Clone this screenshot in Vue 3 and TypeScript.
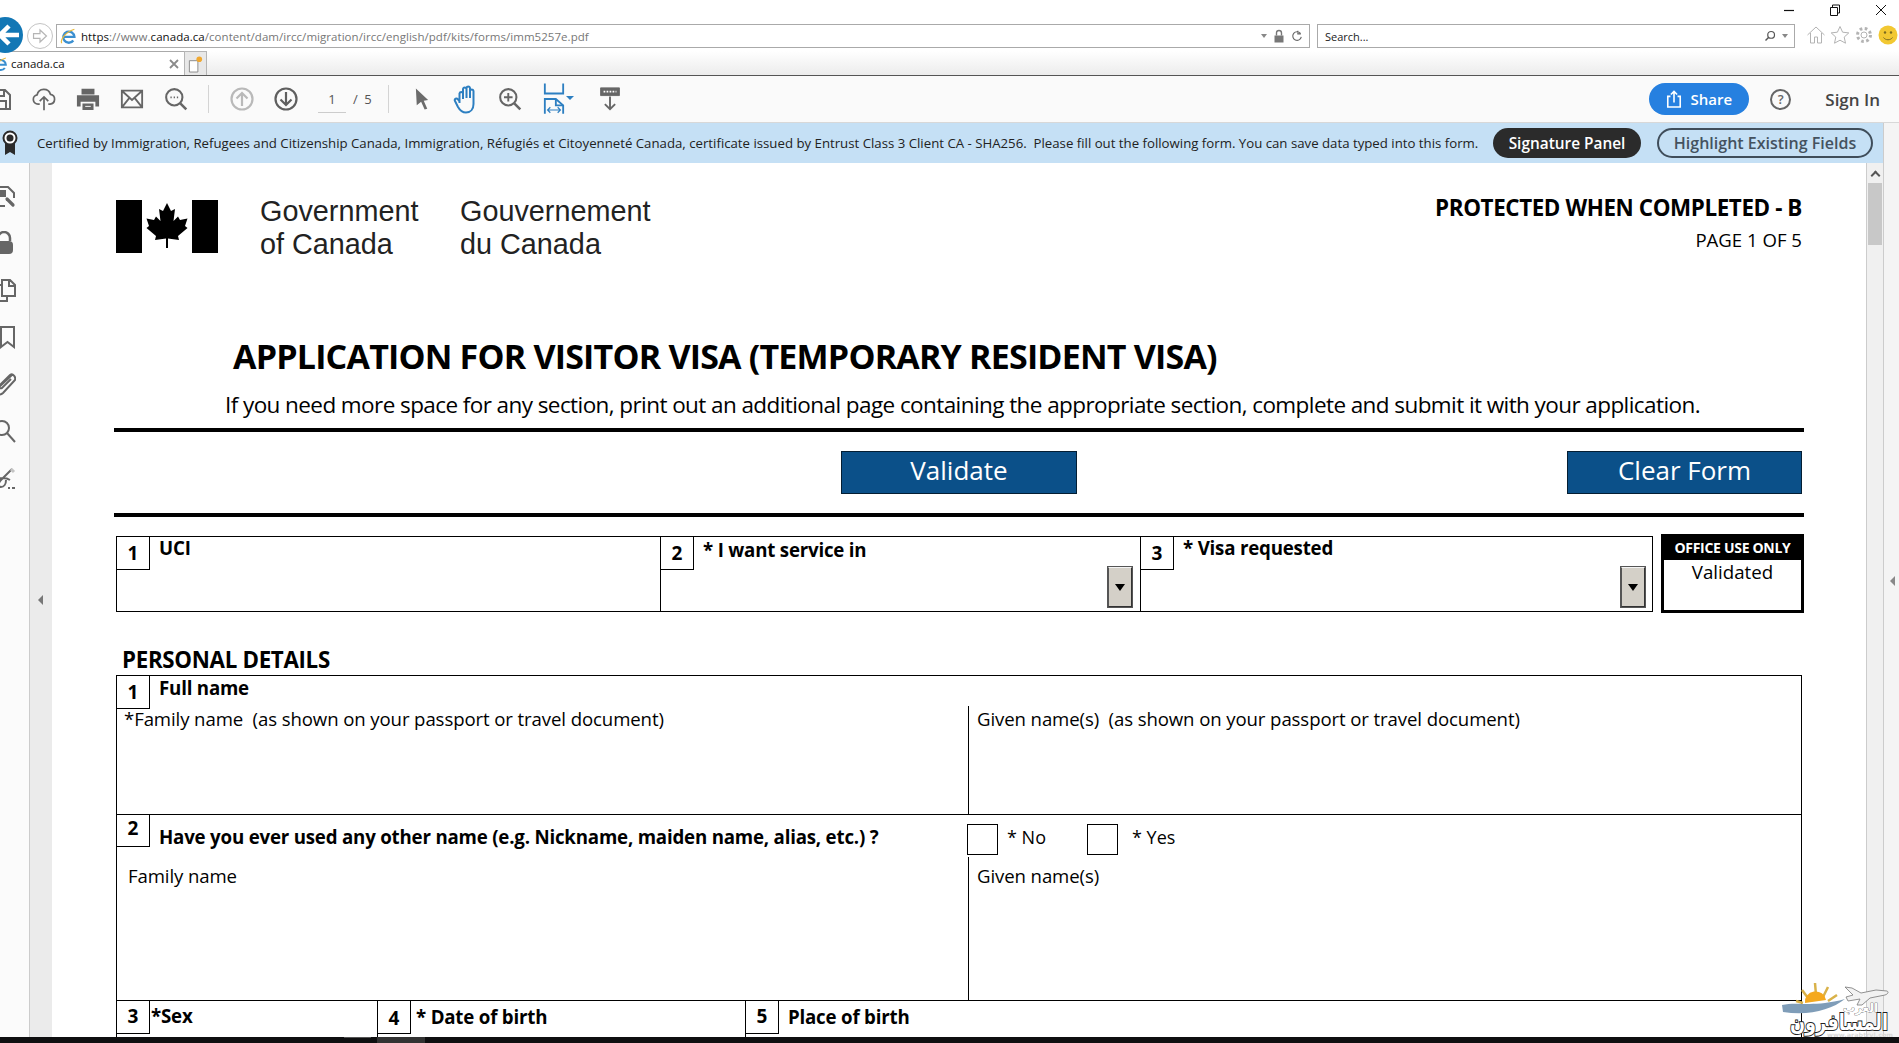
<script setup lang="ts">
const trustText =
  'Certified by Immigration, Refugees and Citizenship Canada, Immigration, Réfugiés et Citoyenneté Canada, certificate issued by Entrust Class 3 Client CA - SHA256.  Please fill out the following form. You can save data typed into this form.'
</script>

<template>
  <div class="screen">
    <!-- browser chrome -->
    <header class="chrome">
      <div class="win-row">
        <svg class="win" viewBox="0 0 12 12"><path d="M1 6.500h10" stroke="#111" stroke-width="1.200" /></svg>
        <svg class="win" viewBox="0 0 12 12" fill="none" stroke="#111"><path d="M1.500 3.500h7v8h-7zM3.500 3.500v-2.500h7v8h-2" /></svg>
        <svg class="win" viewBox="0 0 12 12" fill="none" stroke="#111"><path d="M1 1l10 10M11 1L1 11" /></svg>
      </div>
      <div class="addr-row">
        <div class="nav-back">
          <svg viewBox="0 0 36 36"><path d="M28 18H10M18 9l-9 9 9 9" fill="none" stroke="#fff" stroke-width="4.500" /></svg>
        </div>
        <div class="nav-fwd">
          <svg viewBox="0 0 26 26" fill="none" stroke="#b5b5b5" stroke-width="1.300"><path d="M6 10.500h7V6.500l7 6.500-7 6.500v-4H6z" /></svg>
        </div>
        <div class="addr">
          <svg class="ie" viewBox="0 0 20 20">
            <path d="M4.500 11h11.500a6.200 6.200 0 1 0-1.200 4" fill="none" stroke="#3b8fd0" stroke-width="2.600" />
            <path d="M2 18c-2-3 3-12 14-15.500" fill="none" stroke="#e8b93c" stroke-width="1.300" />
          </svg>
          <span class="url"><b>https</b>://www.<b>canada.ca</b>/content/dam/ircc/migration/ircc/english/pdf/kits/forms/imm5257e.pdf</span>
          <span class="addr-end">
            <i class="caret-small" />
            <svg viewBox="0 0 12 14" class="lock"><path d="M1.500 6.500h9v7h-9z" fill="#777" /><path d="M3.500 6.500V4a2.500 2.500 0 0 1 5 0v2.500" fill="none" stroke="#777" stroke-width="1.400" /></svg>
            <svg viewBox="0 0 14 14" class="lock"><path d="M11 4a5 5 0 1 0 1 4M8 1v3.500h3.500" fill="none" stroke="#666" stroke-width="1.300" /></svg>
          </span>
        </div>
        <div class="search">
          <span>Search...</span>
          <span class="addr-end">
            <svg viewBox="0 0 16 16" class="lock"><circle cx="9.500" cy="6.500" r="4.500" fill="none" stroke="#555" stroke-width="1.600" /><path d="M6 10l-4 4" stroke="#555" stroke-width="2" /></svg>
            <i class="caret-small" />
          </span>
        </div>
        <div class="ie-tools">
          <svg viewBox="0 0 20 20" fill="none" stroke="#b3b3b3"><path d="M1.500 10L10 2l8.500 8M4.500 8v10h4v-6h3v6h4V8" /></svg>
          <svg viewBox="0 0 20 20" fill="none" stroke="#b3b3b3"><path d="M10 1.500l2.600 5.700 6.200.7-4.600 4.200 1.300 6.100L10 15.200l-5.500 3 1.300-6.100-4.600-4.200 6.200-.7z" /></svg>
          <svg viewBox="0 0 20 20" fill="none" stroke="#b3b3b3"><circle cx="10" cy="10" r="3" /><circle cx="10" cy="10" r="6.500" stroke-width="3" stroke-dasharray="2.600 2.500" /></svg>
          <svg viewBox="0 0 20 20"><circle cx="10" cy="10" r="9.500" fill="#f2c832" /><circle cx="7" cy="7.500" r="1.200" fill="#7a6a20" /><circle cx="13" cy="7.500" r="1.200" fill="#7a6a20" /><path d="M5.500 12.500c2 3 7 3 9 0" fill="none" stroke="#7a6a20" /></svg>
        </div>
      </div>
      <div class="tab-row">
        <div class="tab">
          <svg class="ie tab-ie" viewBox="0 0 20 20">
            <path d="M4.500 11h11.500a6.200 6.200 0 1 0-1.200 4" fill="none" stroke="#3b8fd0" stroke-width="2.600" />
            <path d="M2 18c-2-3 3-12 14-15.500" fill="none" stroke="#e8b93c" stroke-width="1.300" />
          </svg>
          <span class="tab-title">canada.ca</span>
          <svg class="tab-x" viewBox="0 0 10 10"><path d="M1 1l8 8M9 1L1 9" stroke="#8a8a8a" stroke-width="1.800" /></svg>
        </div>
        <div class="new-tab">
          <svg viewBox="0 0 18 20"><path d="M2.500 6.500h9v12h-9z" fill="#fff" stroke="#888" /><circle cx="13" cy="5" r="3" fill="#f0a830" /></svg>
        </div>
      </div>
    </header>

    <!-- acrobat toolbar -->
    <div class="toolbar">
      <span class="tool first">
        <svg viewBox="0 0 24 24" fill="none" stroke="#666" stroke-width="2"><path d="M3 3h14l5 5v14H3zM7 3v6h9V3M7 22v-8h11v8" /></svg>
      </span>
      <span class="tool">
        <svg viewBox="0 0 28 28" fill="none" stroke="#666" stroke-width="2"><path d="M9 20H7a5.500 5.500 0 0 1-1-10.900A8 8 0 0 1 21.500 8.500 5.800 5.800 0 0 1 21 20h-2M14 27V12M9 16.500l5-5 5 5" /></svg>
      </span>
      <span class="tool">
        <svg viewBox="0 0 26 26"><path d="M6 2h14v6H6zM1 9h24v12h-4v-5H5v5H1zM7 18h12v7H7z" fill="#666" /><path d="M10 21h6" stroke="#fff" /></svg>
      </span>
      <span class="tool">
        <svg viewBox="0 0 26 22" fill="none" stroke="#666" stroke-width="2"><path d="M2 2h22v18H2zM2 2l11 10L24 2M2 20l8-10M24 20l-8-10" /></svg>
      </span>
      <span class="tool">
        <svg viewBox="0 0 28 28" fill="none" stroke="#666" stroke-width="2.400"><circle cx="12" cy="12" r="9.500" /><path d="M19 19l7 7" stroke-width="3" /><path d="M7.500 12h1.500M11.300 12h1.500M15 12h1.500" stroke-width="2" /></svg>
      </span>
      <i class="sep first-sep" />
      <span class="tool">
        <svg viewBox="0 0 24 24" fill="none" stroke="#b9b9b9" stroke-width="2.200"><circle cx="12" cy="12" r="10.500" /><path d="M12 19V6M6.500 11.500L12 6l5.500 5.500" /></svg>
      </span>
      <span class="tool">
        <svg viewBox="0 0 24 24" fill="none" stroke="#5f5f5f" stroke-width="2.200"><circle cx="12" cy="12" r="10.500" /><path d="M12 5v13M6.500 12.500L12 18l5.500-5.500" /></svg>
      </span>
      <span class="pager"><span class="page-no">1</span><span class="page-of">/ 5</span></span>
      <i class="sep" />
      <span class="tool tool-arrow">
        <svg viewBox="0 0 16 26"><path d="M1 1l14 13-5 1 4 9-3 1-4-9-5 4z" fill="#6b6b6b" /></svg>
      </span>
      <span class="tool tool-hand">
        <svg viewBox="0 0 26 30" fill="none" stroke="#2d7fc1" stroke-width="2"><path d="M6.500 19V9.500a1.800 1.800 0 0 1 3.500 0V15M10 14V5a1.800 1.800 0 0 1 3.500 0v9M13.500 14V4a1.800 1.800 0 0 1 3.500 0v10M17 14V7a1.800 1.800 0 0 1 3.500 0v13c0 5-3 8.500-7.500 8.500-4 0-6-2-8-5.500l-3-6c-1-2 1.500-3.500 3-1.500l1.500 2" /></svg>
      </span>
      <span class="tool">
        <svg viewBox="0 0 28 28" fill="none" stroke="#666" stroke-width="2.400"><circle cx="12" cy="12" r="9.500" /><path d="M19 19l7 7" stroke-width="3" /><path d="M12 7v10M7 12h10" stroke-width="2.200" /></svg>
      </span>
      <span class="tool tool-fit">
        <svg viewBox="0 0 24 34" fill="none" stroke="#2d7fc1" stroke-width="2"><path d="M2 0v11h20V0" /><path d="M2 33V17h12l8 7v9" /><path d="M14 17v7h8" /><path d="M5 29h14M8 26l-3 3 3 3M16 26l3 3-3 3" stroke-width="1.300" /></svg>
        <i class="caret-blue" />
      </span>
      <span class="tool tool-last">
        <svg viewBox="0 0 24 28" fill="none" stroke="#666"><path d="M1 1h22v9H1z" fill="#666" /><path d="M4.500 5.500h15" stroke="#fff" stroke-width="2" stroke-dasharray="2 1.500" /><path d="M12 11v15M6 20l6 6 6-6" stroke-width="2.200" /></svg>
      </span>

      <div class="tool-right">
        <button class="share">
          <svg viewBox="0 0 18 20" fill="none" stroke="#fff" stroke-width="1.800"><path d="M5 7H2v12h14V7h-3M9 14V2M5.500 5L9 1.500 12.500 5" /></svg>
          Share
        </button>
        <span class="help">?</span>
        <span class="sign-in">Sign In</span>
      </div>
    </div>

    <div class="work">
      <div class="work-main">
        <!-- certificate bar -->
        <div class="trust">
          <svg class="ribbon" viewBox="0 0 16 26">
            <path d="M3 13v12l5-3 5 3V13z" fill="#2b2b2b" />
            <circle cx="8" cy="8" r="6.500" fill="#fff" stroke="#2b2b2b" stroke-width="2" />
            <circle cx="8" cy="8" r="3.500" fill="#2b2b2b" />
          </svg>
          <span class="trust-text">{{ trustText }}</span>
          <button class="sig">Signature Panel</button>
          <button class="hl">Highlight Existing Fields</button>
        </div>

        <div class="viewer">
          <nav class="rail">
            <svg viewBox="0 0 24 24" fill="none" stroke="#666" stroke-width="2"><path d="M8 3h8l6 6v5M8 22h5" /><path d="M8 7h5v5H8z" fill="#666" /><path d="M15 15l6 6" stroke-width="3.200" stroke-linecap="round" /></svg>
            <svg viewBox="0 0 24 24"><path d="M6 10V7a6 6 0 0 1 12 0v3" fill="none" stroke="#666" stroke-width="2.500" /><rect x="3" y="10" width="18" height="13" rx="4" fill="#666" /></svg>
            <svg viewBox="0 0 24 24" fill="none" stroke="#666" stroke-width="2"><path d="M10 18V2h8l5 5v11zM17 2v6h6M10 7H3v16h12v-5" /></svg>
            <svg viewBox="0 0 24 24" fill="none" stroke="#666" stroke-width="2"><path d="M9 2h13v20l-6.500-5-6.500 5z" /></svg>
            <svg viewBox="0 0 24 24" fill="none" stroke="#666" stroke-width="2"><path d="M21 2L6 16c-4 4 1 9 5 5L23 8c1-3-2-7-5-5L8 13c-2 2 0 4 2 3l9-9" /></svg>
            <svg viewBox="0 0 24 24" fill="none" stroke="#666" stroke-width="2"><circle cx="10" cy="9" r="7" /><path d="M15 14l8 9" /></svg>
            <svg viewBox="0 0 24 24" fill="none" stroke="#666" stroke-width="2"><path d="M20 3L9 14c-3 3-3 7 0 7s5-3 5-7M6 13c5-2 9-1 12 1" /><path d="M19 3l3 3" stroke="#c4c4c4" stroke-width="3" /><path d="M16 22h2M20 22h3" /></svg>
          </nav>
          <div class="gutter"><i class="tri-left" /></div>

          <main class="page">
            <div class="doc">
              <div class="mast">
                <svg class="flag" viewBox="0 0 102 53">
                  <path d="M0 0h26v53H0zM76 0h26v53H76z" fill="#000" />
                  <path d="M51 3L55 11 59 9 57.500 21 62 16.500 64 20 71.500 18.500 69 26 71.500 28 62 36 63 40 52 38.500V48H50V38.500L39 40 40 36 30.500 28 33 26 30.500 18.500 38 20 40 16.500 44.500 21 43 9 47 11z" fill="#000" />
                </svg>
                <div class="gov en">Government<br />of Canada</div>
                <div class="gov fr">Gouvernement<br />du Canada</div>
                <div class="prot">
                  <strong>PROTECTED WHEN COMPLETED - B</strong>
                  <span>PAGE 1 OF 5</span>
                </div>
              </div>

              <h1 class="title">APPLICATION FOR VISITOR VISA (TEMPORARY RESIDENT VISA)</h1>
              <p class="sub">If you need more space for any section, print out an additional page containing the appropriate section, complete and submit it with your application.</p>
              <hr class="rule" />
              <div class="actions">
                <button class="blue validate">Validate</button>
                <button class="blue clear">Clear Form</button>
              </div>
              <hr class="rule rule-two" />

              <div class="top-row">
                <div class="top-box">
                  <div class="cell uci"><span class="num">1</span><span class="lbl">UCI</span></div>
                  <div class="cell svc">
                    <span class="num">2</span><span class="lbl lbl-low">* I want service in</span>
                    <span class="drop"><i /></span>
                  </div>
                  <div class="cell visa">
                    <span class="num">3</span><span class="lbl">* Visa requested</span>
                    <span class="drop"><i /></span>
                  </div>
                </div>
                <div class="office">
                  <div class="office-head">OFFICE USE ONLY</div>
                  <div class="office-body">Validated</div>
                </div>
              </div>

              <h2 class="section">PERSONAL DETAILS</h2>

              <div class="table">
                <section class="row row-name">
                  <div class="row-head"><span class="num">1</span><span class="lbl">Full name</span></div>
                  <div class="cols">
                    <div class="col first-col fam">*Family name&nbsp; (as shown on your passport or travel document)</div>
                    <div class="col">Given name(s)&nbsp; (as shown on your passport or travel document)</div>
                  </div>
                </section>
                <section class="row row-other">
                  <div class="row-head other-head">
                    <span class="num">2</span>
                    <span class="lbl other-lbl">Have you ever used any other name (e.g. Nickname, maiden name, alias, etc.) ?</span>
                    <span class="check" /><span class="check-lbl">* No</span>
                    <span class="check yes-box" /><span class="check-lbl yes-lbl">* Yes</span>
                  </div>
                  <div class="cols alias-cols">
                    <div class="col first-col alias">Family name</div>
                    <div class="col">Given name(s)</div>
                  </div>
                </section>
                <section class="row row-bio">
                  <div class="bio sex"><span class="num">3</span><span class="lbl tight">*Sex</span></div>
                  <div class="bio dob"><span class="num">4</span><span class="lbl tight">* Date of birth</span></div>
                  <div class="bio pob"><span class="num">5</span><span class="lbl">Place of birth</span></div>
                </section>
              </div>
            </div>
          </main>

          <div class="scroll">
            <i class="scroll-up" />
            <div class="thumb" />
          </div>
        </div>
      </div>
      <aside class="side"><i class="tri-side" /></aside>
    </div>

    <footer class="taskbar"><i class="task-a" /><i class="task-b" /></footer>

    <!-- site watermark stamped on the capture -->
    <svg class="mark" viewBox="0 0 112 54">
      <path d="M14 18l7 2M20 7l6 8M33 0l1 12M46 4l-5 10M55 12l-9 6" stroke="#d9b24a" stroke-width="2.500" />
      <path d="M23 20a10.500 10 0 0 1 21-3z" fill="#f5a91e" />
      <path d="M0 22c16-4 30 3 63-6-14 11-36 17-62 13z" fill="#7f9db8" />
      <path d="M63 4l7 1 9 5 15-3 11 1c2 1 1 3-2 4L88 15 80 22h-5l3-6-12 2-2-4 7-2z" fill="#f2f2f2" stroke="#777" stroke-width=".8" />
      <text x="96" y="29" text-anchor="end" class="mark-small">العرب</text>
      <text x="106" y="47" text-anchor="end" textLength="98" lengthAdjust="spacingAndGlyphs" class="mark-big">المسافرون</text>
      <text x="111" y="53.500" text-anchor="end" textLength="66" lengthAdjust="spacingAndGlyphs" class="mark-url">www.arabtrvl.com</text>
    </svg>
  </div>
</template>

<style scoped>
.screen {
  width: 1899px;
  height: 1043px;
  display: flex;
  flex-direction: column;
  overflow: hidden;
  background: #fff;
  font-family: "Open Sans", sans-serif;
  color: #000;
  position: relative;
}

/* browser */
.chrome {
  height: 75px;
  flex: none;
  background: #fff;
  border-bottom: 1px solid #555;
}
.win-row {
  height: 24px;
  display: flex;
  justify-content: flex-end;
  gap: 34px;
  padding: 4px 12px 0 0;
  box-sizing: border-box;
}
.win { width: 12px; height: 12px; }
.addr-row {
  height: 27px;
  display: flex;
  align-items: flex-start;
  position: relative;
}
.nav-back {
  position: absolute;
  left: -13px;
  top: -7px;
  width: 36px;
  height: 36px;
  border-radius: 50%;
  background: #1277b5;
  z-index: 2;
}
.nav-back svg { width: 36px; height: 36px; margin-left: 4px; }
.nav-fwd {
  margin: -1px 0 0 27px;
  width: 26px;
  height: 26px;
  flex: none;
  box-sizing: border-box;
  border: 1px solid #c4c4c4;
  border-radius: 50%;
}
.nav-fwd svg { width: 24px; height: 24px; display: block; }
.addr {
  margin-left: 3px;
  width: 1254px;
  height: 24px;
  flex: none;
  box-sizing: border-box;
  border: 1px solid #aaa;
  display: flex;
  align-items: center;
  font-size: 11.500px;
  color: #777;
  padding-left: 3px;
}
.ie { width: 18px; height: 18px; flex: none; }
.url { margin-left: 3px; white-space: nowrap; letter-spacing: .05px; }
.url b { font-weight: 400; color: #111; }
.addr-end {
  margin-left: auto;
  display: flex;
  align-items: center;
  gap: 6px;
  padding-right: 6px;
}
.caret-small {
  width: 0;
  height: 0;
  border: 3.500px solid transparent;
  border-top: 4px solid #888;
  border-bottom: 0;
}
.lock { width: 12px; height: 14px; }
.search {
  margin-left: 7px;
  width: 478px;
  height: 24px;
  flex: none;
  box-sizing: border-box;
  border: 1px solid #aaa;
  display: flex;
  align-items: center;
  font-size: 11px;
  color: #222;
  padding-left: 7px;
}
.ie-tools {
  margin: 1px 0 0 11px;
  display: flex;
  gap: 4px;
  flex: none;
}
.ie-tools svg { width: 20px; height: 20px; }
.tab-row {
  height: 24px;
  display: flex;
  background: linear-gradient(#fff, #ececec);
}
.tab {
  width: 184px;
  display: flex;
  align-items: center;
  background: #fff;
  box-sizing: border-box;
  border-top: 1px solid #aaa;
  padding-right: 5px;
  overflow: hidden;
}
.tab-ie { margin-left: -7px; width: 16px; height: 16px; }
.tab-title { margin-left: 2px; font-size: 11.500px; color: #111; }
.tab-x { margin-left: auto; width: 10px; height: 10px; }
.new-tab {
  width: 23px;
  box-sizing: border-box;
  background: #e8e8e8;
  border: 1px solid #b5b5b5;
  border-bottom: 0;
  display: flex;
  align-items: center;
  justify-content: center;
}
.new-tab svg { width: 17px; height: 20px; }

/* acrobat toolbar */
.toolbar {
  height: 46px;
  flex: none;
  display: flex;
  align-items: center;
  background: #fafafa;
  border-bottom: 1px solid #d8d8d8;
}
.tool {
  width: 44px;
  height: 44px;
  flex: none;
  display: flex;
  align-items: center;
  justify-content: center;
  position: relative;
}
.tool.first { margin-left: -22px; }
.tool svg { width: 24px; height: 24px; }
.tool-arrow svg { width: 14px; height: 24px; }
.tool-hand svg { width: 26px; height: 30px; }
.tool-fit svg { width: 22px; height: 32px; }
.tool-last { margin-left: 12px; }
.caret-blue {
  position: absolute;
  left: 34px;
  top: 19px;
  width: 0;
  height: 0;
  border: 4px solid transparent;
  border-top: 4px solid #2d7fc1;
  border-bottom: 0;
}
.sep {
  width: 1px;
  height: 28px;
  background: #d4d4d4;
  flex: none;
  margin: 0 11px;
}
.first-sep { margin-left: 10px; }
.pager {
  display: flex;
  width: 59px;
  margin-left: 10px;
  font-size: 13px;
  color: #555;
  align-items: center;
  flex: none;
}
.page-no {
  width: 28px;
  height: 27px;
  line-height: 26px;
  text-align: center;
  border-bottom: 1px solid #ccc;
  box-sizing: border-box;
}
.page-of { margin-left: 7px; word-spacing: 3px; white-space: nowrap; }
.tool-right {
  margin-left: auto;
  display: flex;
  align-items: center;
  padding-right: 19px;
}
.share {
  width: 100px;
  height: 32px;
  border: 0;
  border-radius: 16px;
  background: #2680e0;
  color: #fff;
  font: 600 15px "Open Sans", sans-serif;
  display: flex;
  align-items: center;
  justify-content: center;
  gap: 8px;
  padding: 0;
}
.share svg { width: 16px; height: 18px; }
.help {
  width: 21px;
  height: 21px;
  box-sizing: border-box;
  border: 2px solid #666;
  border-radius: 50%;
  margin-left: 21px;
  font: 600 13px/17px "Open Sans", sans-serif;
  color: #666;
  text-align: center;
}
.sign-in {
  margin-left: 34px;
  font-size: 17px;
  font-weight: 600;
  color: #444;
  white-space: nowrap;
}

/* body */
.work {
  flex: 1;
  min-height: 0;
  display: flex;
}
.work-main {
  width: 1883px;
  display: flex;
  flex-direction: column;
  min-height: 0;
}
.side {
  flex: 1;
  background: #f4f4f4;
  border-left: 1px solid #ccc;
  position: relative;
}
.tri-side {
  position: absolute;
  left: 6px;
  top: 453px;
  width: 0;
  height: 0;
  border: 5px solid transparent;
  border-right: 5px solid #888;
  border-left: 0;
}
.trust {
  height: 40px;
  flex: none;
  background: #c5e0f5;
  display: flex;
  align-items: center;
  font-size: 13.230px;
  color: #222;
}
.ribbon { width: 16px; height: 26px; margin-left: 2px; flex: none; }
.trust-text {
  margin-left: 19px;
  white-space: pre;
  width: 1456px;
  flex: none;
}
.sig, .hl {
  height: 30px;
  border-radius: 15px;
  font: 600 15.400px "Open Sans", sans-serif;
  padding: 0;
  white-space: nowrap;
  flex: none;
}
.sig {
  width: 148px;
  background: #2b2b2b;
  border: 0;
  color: #fff;
}
.hl {
  width: 216px;
  margin-left: 16px;
  background: transparent;
  border: 2px solid #3f4d5a;
  color: #44525f;
  font-size: 16px;
}
.viewer {
  flex: 1;
  min-height: 0;
  display: flex;
}
.rail {
  width: 29px;
  flex: none;
  background: #fbfbfb;
  border-right: 1px solid #ccc;
  display: flex;
  flex-direction: column;
  gap: 23px;
  padding-top: 21px;
  overflow: hidden;
}
.rail svg {
  width: 24px;
  height: 24px;
  margin-left: -8px;
  flex: none;
}
.gutter {
  width: 22px;
  flex: none;
  background: #ebebeb;
  position: relative;
}
.tri-left {
  position: absolute;
  left: 8px;
  top: 432px;
  width: 0;
  height: 0;
  border: 5px solid transparent;
  border-right: 5px solid #777;
  border-left: 0;
}
.page {
  flex: 1;
  min-width: 0;
  background: #fff;
  overflow: hidden;
  padding-left: 62px;
}
.scroll {
  width: 17px;
  flex: none;
  background: #f0f0f0;
  border-left: 1px solid #ccc;
  box-sizing: border-box;
}
.scroll-up {
  display: block;
  width: 7px;
  height: 7px;
  margin: 9px 0 0 5px;
  border-left: 2px solid #555;
  border-top: 2px solid #555;
  transform: rotate(45deg);
  box-sizing: border-box;
}
.thumb {
  margin: 4px 1px 0;
  height: 62px;
  background: #c8c8c8;
}
.doc {
  width: 1690px;
}
.mast {
  height: 100px;
  display: flex;
  padding-top: 37px;
  box-sizing: border-box;
}
.flag {
  width: 102px;
  height: 53px;
  margin-left: 2px;
  flex: none;
}
.gov {
  font-family: "Liberation Sans", Arial, sans-serif;
  font-size: 28.800px;
  line-height: 33px;
  color: #222;
  margin-top: -5px;
}
.en { margin-left: 42px; width: 200px; }
.fr { width: 260px; }
.prot {
  margin-left: auto;
  margin-right: 2px;
  display: flex;
  flex-direction: column;
  align-items: flex-end;
  font-size: 18.600px;
  line-height: 32px;
  margin-top: -9px;
}
.prot strong {
  font-size: 22.400px;
  line-height: 33px;
  letter-spacing: -.4px;
}
.title {
  margin: 73px 0 0 119px;
  font-size: 34px;
  line-height: 40px;
  font-weight: 700;
  white-space: nowrap;
  letter-spacing: -.8px;
}
.sub {
  margin: 13px 0 0 111px;
  font-size: 22.500px;
  line-height: 32px;
  white-space: nowrap;
  letter-spacing: -.58px;
}
.rule {
  height: 4px;
  background: #000;
  border: 0;
  margin: 7px 0 0;
}
.rule-two { margin-top: 19px; }
.actions {
  height: 43px;
  margin-top: 19px;
  display: flex;
}
.blue {
  height: 43px;
  box-sizing: border-box;
  background: #0b5089;
  border: 1px solid #041e33;
  color: #fff;
  font: 400 26px "Open Sans", sans-serif;
  padding: 0 0 6px;
}
.validate { width: 236px; margin-left: 727px; }
.clear { width: 235px; margin-left: auto; margin-right: 2px; }
.top-row {
  margin-top: 17px;
  height: 79px;
  display: flex;
}
.top-box {
  width: 1537px;
  height: 76px;
  margin: 2px 0 0 2px;
  box-sizing: border-box;
  border: 1px solid #000;
  display: grid;
  grid-template-columns: 544px 480px 1fr;
}
.cell {
  display: flex;
  align-items: flex-start;
  position: relative;
  border-right: 1px solid #000;
}
.cell:last-child { border-right: 0; }
.cell .lbl { margin-top: -2px; }
.cell .lbl-low { margin-top: 0; }
.svc .drop { right: 7px; }
.num {
  width: 33px;
  height: 33px;
  flex: none;
  box-sizing: border-box;
  border-right: 1px solid #000;
  border-bottom: 1px solid #000;
  font-size: 19px;
  font-weight: 700;
  line-height: 32px;
  text-align: center;
}
.lbl {
  margin-left: 9px;
  font-size: 18.700px;
  font-weight: 700;
  line-height: 26px;
  white-space: nowrap;
  letter-spacing: -.2px;
}
.drop {
  position: absolute;
  right: 6px;
  bottom: 3px;
  width: 26px;
  height: 42px;
  box-sizing: border-box;
  background: #d4d0c8;
  border: 2px solid;
  border-color: #f4f4f4 #333 #333 #555;
  outline: 1px solid #555;
  outline-offset: -1px;
  display: flex;
  align-items: center;
  justify-content: center;
}
.drop i {
  width: 0;
  height: 0;
  border: 5px solid transparent;
  border-top: 7px solid #000;
  border-bottom: 0;
}
.office {
  width: 143px;
  height: 79px;
  margin-left: 8px;
  box-sizing: border-box;
  border: 3px solid #000;
  flex: none;
}
.office-head {
  height: 23px;
  background: #000;
  color: #fff;
  font-size: 14px;
  font-weight: 700;
  line-height: 21px;
  text-align: center;
  letter-spacing: -.3px;
  white-space: nowrap;
}
.office-body {
  font-size: 18.700px;
  line-height: 24px;
  text-align: center;
}
.section {
  margin: 34px 0 0 8px;
  font-size: 22.300px;
  line-height: 26px;
  font-weight: 700;
  letter-spacing: -.3px;
}
.table {
  margin: 2px 0 0 2px;
  width: 1686px;
  border-left: 1px solid #000;
  border-right: 1px solid #000;
  box-sizing: border-box;
}
.row { border-top: 1px solid #000; box-sizing: border-box; }
.row-name { height: 139px; display: flex; flex-direction: column; }
.row-other { height: 186px; display: flex; flex-direction: column; }
.row-head {
  display: flex;
  align-items: flex-start;
  height: 33px;
  flex: none;
}
.row-name .lbl { margin-top: -1px; }
.cols {
  flex: 1;
  display: grid;
  grid-template-columns: 852px 1fr;
  font-size: 18.600px;
  line-height: 26px;
  margin-top: -3px;
}
.col {
  padding-left: 8px;
  white-space: nowrap;
  letter-spacing: -.1px;
  overflow: hidden;
}
.first-col { border-right: 1px solid #000; }
.fam { padding-left: 7px; }
.alias-cols { margin-top: 0; }
.alias-cols .col { padding-top: 6px; }
.alias-cols .alias { padding-left: 11px; }
.other-head { height: 42px; }
.other-head .num { height: 32px; line-height: 27px; }
.other-lbl { padding-top: 9px; flex: none; width: 808px; }
.check {
  width: 31px;
  height: 31px;
  box-sizing: border-box;
  border: 1px solid #000;
  margin-top: 9px;
  flex: none;
}
.yes-box { margin-left: 35px; }
.check-lbl {
  margin-left: 9px;
  font-size: 18px;
  line-height: 26px;
  padding-top: 9px;
  width: 45px;
  flex: none;
  white-space: nowrap;
}
.yes-lbl { margin-left: 14px; }
.row-bio {
  height: 60px;
  display: grid;
  grid-template-columns: 261px 368px 1fr;
}
.bio {
  display: flex;
  align-items: flex-start;
  border-right: 1px solid #000;
}
.bio:last-child { border-right: 0; }
.bio .num { line-height: 31px; }
.bio .lbl { margin-top: 2px; }
.tight { margin-left: 1px; }
.dob .tight { margin-left: 5px; }
.dob .lbl, .pob .lbl { padding-top: 1px; }
.dob .num { line-height: 34px; }

.mark {
  position: absolute;
  left: 1782px;
  top: 983px;
  width: 112px;
  height: 54px;
  overflow: visible;
}
.mark-small {
  font: 700 12px "DejaVu Sans", sans-serif;
  fill: #fff;
  stroke: #333;
  stroke-width: .6px;
  paint-order: stroke;
}
.mark-big {
  font: 700 22px "DejaVu Sans", sans-serif;
  fill: #fff;
  stroke: #222;
  stroke-width: 2px;
  paint-order: stroke;
}
.mark-url {
  font: 700 6px "DejaVu Sans", sans-serif;
  fill: #d8d8d8;
}

.taskbar {
  height: 6px;
  flex: none;
  background: #0f0f10;
  display: flex;
}
.task-a {
  width: 27px;
  height: 1px;
  background: #555;
  margin-left: 344px;
}
.task-b {
  width: 48px;
  height: 6px;
  background: #333;
  margin-left: 6px;
}
</style>
